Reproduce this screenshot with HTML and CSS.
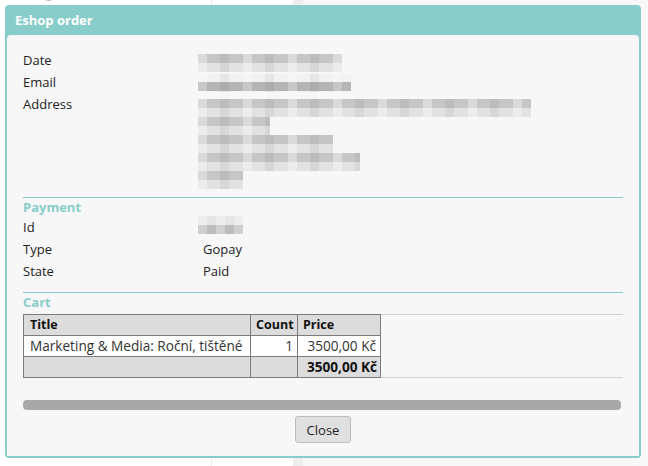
FILE: index.html
```html
<!DOCTYPE html>
<html lang="cs">
<head>
<meta charset="utf-8">
<title>Eshop order</title>
<link rel="stylesheet" href="styles.css">
</head>
<body>
<div class="backdrop">
  <div class="bg-row bg-top"><span class="bg-c1">Marketing &amp; Media 24/2019</span><span class="bg-c2">90 Kč</span><span class="bg-c3"></span><span class="bg-rest"></span></div>
  <div class="bg-fill"><span class="bg-c1"></span><span class="bg-c2"></span><span class="bg-c3"></span><span class="bg-rest"></span></div>
  <div class="bg-row bg-bottom"><span class="bg-c1">Marketing &amp; Media 25/2019</span><span class="bg-c2">90 Kč</span><span class="bg-c3"></span><span class="bg-rest"></span></div>
</div>

<div class="dialog" role="dialog" aria-label="Eshop order">
  <div class="titlebar">Eshop order</div>
  <div class="content">
    <div class="info">
      <div class="label">Date</div>
      <div class="value"><div class="blur blur-date"></div></div>
      <div class="label">Email</div>
      <div class="value"><div class="blur blur-email"></div></div>
      <div class="label">Address</div>
      <div class="value value-address">
        <div class="blur blur-a1"></div>
        <div class="blur blur-a2"></div>
        <div class="blur blur-a3"></div>
        <div class="blur blur-a4"></div>
        <div class="blur blur-a5"></div>
      </div>
    </div>

    <div class="section">
      <div class="section-title">Payment</div>
      <div class="info">
        <div class="label">Id</div>
        <div class="value"><div class="blur blur-id"></div></div>
        <div class="label">Type</div>
        <div class="value">Gopay</div>
        <div class="label">State</div>
        <div class="value">Paid</div>
      </div>
    </div>

    <div class="section">
      <div class="section-title">Cart</div>
      <div class="cart-wrap">
        <table class="cart">
          <colgroup>
            <col class="c-title">
            <col class="c-count">
            <col class="c-price">
          </colgroup>
          <thead>
            <tr><th>Title</th><th>Count</th><th>Price</th></tr>
          </thead>
          <tbody>
            <tr class="item"><td class="first">Marketing &amp; Media: Roční, tištěné</td><td class="num">1</td><td class="num">3500,00 Kč</td></tr>
            <tr class="total"><td></td><td></td><td class="num strong">3500,00 Kč</td></tr>
          </tbody>
        </table>
      </div>
    </div>

    <div class="progress"></div>
    <div class="actions"><button class="btn" type="button">Close</button></div>
  </div>
</div>
</body>
</html>
```

FILE: styles.css
```css
* { box-sizing: border-box; }

html, body {
  margin: 0;
  padding: 0;
}

body {
  width: 648px;
  height: 466px;
  overflow: hidden;
  background: #ffffff;
  font-family: "Open Sans", "Noto Sans", sans-serif;
  font-size: 13px;
  color: #222;
  position: relative;
}

/* page behind the modal */
.backdrop {
  height: 466px;
  display: flex;
  flex-direction: column;
}

.bg-row,
.bg-fill {
  display: flex;
  color: #bdbdbd;
  font-size: 13px;
  line-height: 25px;
}

.bg-top {
  height: 25px;
  margin-top: -19px;
  flex: none;
}

.bg-fill {
  flex: 1;
}

.bg-bottom {
  height: 25px;
  margin-bottom: -22px;
  flex: none;
}

.bg-c1 {
  width: 212px;
  flex: none;
  white-space: nowrap;
  overflow: hidden;
  border-right: 1px solid #ececec;
  text-indent: -9px;
}

.bg-c2 {
  width: 81px;
  flex: none;
  text-align: right;
  padding-right: 8px;
  white-space: nowrap;
}

.bg-c3 {
  width: 10px;
  flex: none;
  background: #eeeeee;
}

.bg-rest {
  flex: 1;
  background: #f8f8f8;
}

/* dialog */
.dialog {
  position: absolute;
  left: 5px;
  top: 5px;
  width: 636px;
  height: 453px;
  background: #88cdca;
  border-radius: 4px;
  padding: 0 2px 2px;
  display: flex;
  flex-direction: column;
}

.titlebar {
  height: 30px;
  flex: none;
  padding: 6px 0 0 8px;
  color: #fff;
  font-weight: 700;
  font-size: 13px;
  line-height: 18px;
}

.content {
  flex: 1;
  background: #f7f7f7;
  border-radius: 4px 4px 0 0;
  padding: 14px 16px 12px;
  display: flex;
  flex-direction: column;
}

.info {
  display: grid;
  grid-template-columns: 180px 1fr;
  line-height: 18px;
}

.label,
.value {
  padding: 2px 0;
}

.value {
  min-height: 22px;
}

.blur {
  height: 18px;
  margin-left: -5px;
  background:
    repeating-linear-gradient(90deg, rgba(255,255,255,0.35) 0 9px, rgba(0,0,0,0) 9px 22px, rgba(0,0,0,0.05) 22px 31px, rgba(0,0,0,0) 31px 45px),
    linear-gradient(#c6c6c6 0 9px, #e2e2e2 9px 18px);
}

.blur-date { width: 144px; margin-top: 3px; margin-bottom: -3px; }
.blur-email {
  width: 153px;
  margin-top: 1px;
  margin-bottom: -1px;
  background:
    repeating-linear-gradient(90deg, rgba(255,255,255,0.25) 0 9px, rgba(0,0,0,0) 9px 22px, rgba(0,0,0,0.05) 22px 31px, rgba(0,0,0,0) 31px 45px),
    linear-gradient(#f2f2f2 0 8px, #b5b5b5 8px 17px, #f1f1f1 17px 18px);
}
.value-address { padding-top: 6px; padding-bottom: 0; margin-bottom: -2px; }
.blur-a1 { width: 333px; }
.blur-a2 { width: 72px; }
.blur-a3 { width: 135px; }
.blur-a4 { width: 162px; }
.blur-a5 { width: 45px; }
.blur-id {
  width: 45px;
  margin-top: -2px;
  margin-bottom: 2px;
  background:
    repeating-linear-gradient(90deg, rgba(255,255,255,0.3) 0 9px, rgba(0,0,0,0) 9px 18px),
    linear-gradient(#e6e6e6 0 9px, #bcbcbc 9px 18px);
}

.section {
  margin-top: 10px;
  border-top: 1px solid #88cdca;
}

.section-title {
  color: #88cdca;
  font-weight: 700;
  line-height: 18px;
}

.cart-wrap {
  margin-top: 3px;
  border-top: 1px solid #cfcfcf;
  border-bottom: 1px solid #cfcfcf;
}

.cart {
  border-collapse: collapse;
  table-layout: fixed;
  width: 357px;
  margin: -1px 0;
  font-size: 13.6px;
  line-height: 18px;
}

.c-title { width: 227px; }
.c-count { width: 47px; }
.c-price { width: 83px; }

.cart th,
.cart td {
  border: 1px solid #7c7c7c;
  padding: 1px 3px 1px 5px;
  white-space: nowrap;
  overflow: hidden;
}

.cart th {
  text-align: left;
  font-weight: 700;
  font-size: 12.5px;
  background: #dcdcdc;
  color: #111;
}

.cart th:first-child,
.cart td.first { padding-left: 6px; padding-right: 2px; }

.cart .item td { background: #fff; color: #333; }
.cart .total td { background: #dcdcdc; }
.cart .num { text-align: right; padding-right: 4px; }
.cart .strong { font-weight: 700; color: #111; padding-right: 3px; }

.progress {
  margin-top: 22px;
  margin-right: 2px;
  height: 10px;
  border-radius: 4px;
  background: #a8a8a8;
}

.actions {
  margin-top: 6px;
  display: flex;
  justify-content: center;
}

.btn {
  width: 56px;
  height: 27px;
  font-family: inherit;
  font-size: 13px;
  color: #222;
  background: #e0e0e0;
  border: 1px solid #bdbdbd;
  border-radius: 3px;
  padding: 0;
}
```
